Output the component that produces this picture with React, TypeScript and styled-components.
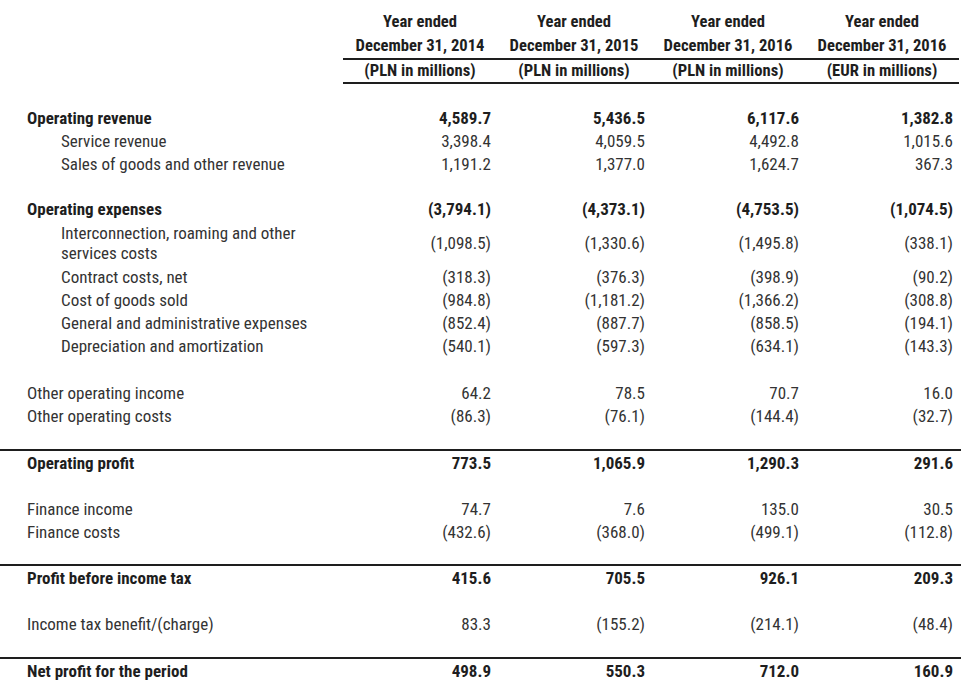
import React, { FC } from 'react';
import styled, { createGlobalStyle } from 'styled-components';

const GlobalStyle = createGlobalStyle`
    html, body {
        margin: 0;
        padding: 0;
        background: #ffffff;
    }
    body {
        font-family: "Roboto Condensed", "Liberation Sans Narrow", "Arial Narrow", Roboto, sans-serif;
        font-size: 17px;
        color: #333333;
    }
`

interface Line {
    label: React.ReactNode
    values: Array<string>
    bold?: boolean
    indent?: boolean
    tall?: boolean
}

interface Block {
    gap: number
    rule?: boolean
    lines: Array<Line>
}

const headers = [
    { date: 'December 31, 2014', unit: '(PLN in millions)' },
    { date: 'December 31, 2015', unit: '(PLN in millions)' },
    { date: 'December 31, 2016', unit: '(PLN in millions)' },
    { date: 'December 31, 2016', unit: '(EUR in millions)' },
]

const blocks: Array<Block> = [
    {
        gap: 22, lines: [
            { label: 'Operating revenue', values: ['4,589.7', '5,436.5', '6,117.6', '1,382.8'], bold: true },
            { label: 'Service revenue', values: ['3,398.4', '4,059.5', '4,492.8', '1,015.6'], indent: true },
            { label: 'Sales of goods and other revenue', values: ['1,191.2', '1,377.0', '1,624.7', '367.3'], indent: true },
        ]
    },
    {
        gap: 22, lines: [
            { label: 'Operating expenses', values: ['(3,794.1)', '(4,373.1)', '(4,753.5)', '(1,074.5)'], bold: true },
            { label: <>Interconnection, roaming and other<br />services costs</>, values: ['(1,098.5)', '(1,330.6)', '(1,495.8)', '(338.1)'], indent: true, tall: true },
            { label: 'Contract costs, net', values: ['(318.3)', '(376.3)', '(398.9)', '(90.2)'], indent: true },
            { label: 'Cost of goods sold', values: ['(984.8)', '(1,181.2)', '(1,366.2)', '(308.8)'], indent: true },
            { label: 'General and administrative expenses', values: ['(852.4)', '(887.7)', '(858.5)', '(194.1)'], indent: true },
            { label: 'Depreciation and amortization', values: ['(540.1)', '(597.3)', '(634.1)', '(143.3)'], indent: true },
        ]
    },
    {
        gap: 24, lines: [
            { label: 'Other operating income', values: ['64.2', '78.5', '70.7', '16.0'] },
            { label: 'Other operating costs', values: ['(86.3)', '(76.1)', '(144.4)', '(32.7)'] },
        ]
    },
    {
        gap: 22, rule: true, lines: [
            { label: 'Operating profit', values: ['773.5', '1,065.9', '1,290.3', '291.6'], bold: true },
        ]
    },
    {
        gap: 23, lines: [
            { label: 'Finance income', values: ['74.7', '7.6', '135.0', '30.5'] },
            { label: 'Finance costs', values: ['(432.6)', '(368.0)', '(499.1)', '(112.8)'] },
        ]
    },
    {
        gap: 21, rule: true, lines: [
            { label: 'Profit before income tax', values: ['415.6', '705.5', '926.1', '209.3'], bold: true },
        ]
    },
    {
        gap: 23, lines: [
            { label: 'Income tax benefit/(charge)', values: ['83.3', '(155.2)', '(214.1)', '(48.4)'] },
        ]
    },
    {
        gap: 22, rule: true, lines: [
            { label: 'Net profit for the period', values: ['498.9', '550.3', '712.0', '160.9'], bold: true },
        ]
    },
]

const App: FC = () => {
    return (
        <>
            <GlobalStyle />
            <Sheet>
                <HeadRow>
                    <Spacer />
                    {headers.map((h, i) => (
                        <HeadCell key={i}>Year ended<br />{h.date}</HeadCell>
                    ))}
                </HeadRow>
                <UnitRow>
                    <Spacer />
                    {headers.map((h, i) => (
                        <HeadCell key={i}>{h.unit}</HeadCell>
                    ))}
                </UnitRow>
                {blocks.map((block, b) => (
                    <Section key={b} gap={block.gap} rule={block.rule}>
                        {block.lines.map((line, l) => (
                            <Row key={l} tall={line.tall} bold={line.bold}>
                                <Label indent={line.indent}>{line.label}</Label>
                                {line.values.map((v, i) => (
                                    <Value key={i}>{v}</Value>
                                ))}
                            </Row>
                        ))}
                    </Section>
                ))}
            </Sheet>
        </>
    )
}
export default App

const Sheet = styled.div`
    width: 974px;
    padding-top: 10px;
    box-sizing: border-box;
`

const HeadRow = styled.div`
    display: grid;
    grid-template-columns: 343px repeat(4, 154px);
    font-size: 16.6px;
    font-weight: 700;
    color: #1e1e1e;
    line-height: 24px;
`

const UnitRow = styled(HeadRow)`
    width: 961px;
    line-height: 22px;
    & > div:not(:first-child) {
        border-top: 2px solid #1e1e1e;
        border-bottom: 2px solid #1e1e1e;
    }
`

const Spacer = styled.div``

const HeadCell = styled.div`
    text-align: center;
    white-space: nowrap;
    :last-child {
        padding-right: 2px;
    }
`

const Section = styled.div<{ gap: number, rule?: boolean }>`
    width: 961px;
    margin-top: ${props => props.gap}px;
    border-top: ${props => props.rule ? '2px solid #1e1e1e' : 'none'};
`

const Row = styled.div<{ tall?: boolean, bold?: boolean }>`
    display: grid;
    grid-template-columns: 343px repeat(4, 154px);
    align-items: center;
    height: ${props => props.tall ? 45 : 23}px;
    font-weight: ${props => props.bold ? 700 : 400};
    color: ${props => props.bold ? '#1e1e1e' : '#333333'};
`

const Label = styled.div<{ indent?: boolean }>`
    padding-left: ${props => props.indent ? 61 : 27}px;
    line-height: 20px;
    white-space: nowrap;
`

const Value = styled.div`
    text-align: right;
    padding-right: 6px;
    white-space: nowrap;
`
